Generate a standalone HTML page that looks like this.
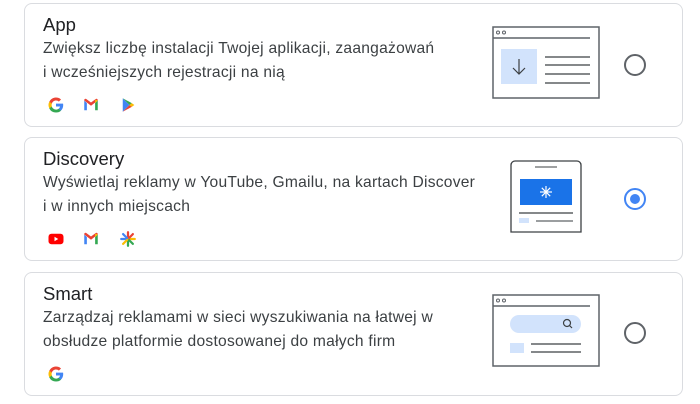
<!DOCTYPE html><html><head><meta charset="utf-8"><style>
body{margin:0;width:700px;height:404px;background:#fff;font-family:"Liberation Sans",Arial,sans-serif;position:relative;overflow:hidden}
.card{position:absolute;left:24px;width:659px;height:124px;border:1px solid #dadce0;border-radius:8px;box-sizing:border-box}
.t{position:absolute;left:18px;top:10px;font-size:18.5px;color:#202124}
.d{position:absolute;left:18px;top:33px;font-size:15.6px;letter-spacing:0.25px;line-height:24px;color:#3c4043;white-space:nowrap}
.ic{position:absolute;top:92px}
.r{position:absolute;left:599px;width:18px;height:18px;border:2px solid #5f6368;border-radius:50%}
.r.on{border-color:#4285f4}
.r.on::after{content:"";position:absolute;left:4px;top:4px;width:10px;height:10px;border-radius:50%;background:#4285f4}
svg{position:absolute}
</style></head><body>
<div class="card" style="top:3px">
<div class="t">App</div>
<div class="d">Zwiększ liczbę instalacji Twojej aplikacji, zaangażowań<br>i wcześniejszych rejestracji na nią</div>
<svg class="ic" style="left:22px" width="18" height="18" viewBox="0 0 24 24"><path d="M21.6 12.2c0-.7-.1-1.4-.2-2H12v3.8h5.4a4.6 4.6 0 0 1-2 3v2.5h3.2c1.9-1.7 3-4.3 3-7.3z" fill="#4285f4"/><path d="M12 22c2.7 0 5-.9 6.6-2.4l-3.2-2.5c-.9.6-2 1-3.4 1-2.6 0-4.8-1.8-5.6-4.1H3.1v2.6A10 10 0 0 0 12 22z" fill="#34a853"/><path d="M6.4 14a6 6 0 0 1 0-3.9V7.5H3.1a10 10 0 0 0 0 9z" fill="#fbbc04"/><path d="M12 6c1.5 0 2.8.5 3.8 1.5l2.9-2.9A10 10 0 0 0 3.1 7.5l3.3 2.6C7.2 7.8 9.4 6 12 6z" fill="#ea4335"/></svg>
<svg class="ic" style="left:57px" width="18" height="18" viewBox="0 0 24 24"><path d="M3 6v13h3.5V9.5z" fill="#4285f4"/><path d="M17.5 9.5V19H21V6z" fill="#34a853"/><path d="M3 6l9 7 9-7v-.5c0-1.5-1.7-2.3-2.9-1.4L12 8.7 5.9 4.1C4.7 3.2 3 4 3 5.5z" fill="#ea4335"/><path d="M17.5 4.8L21 6v.1l-3.5 3.4z" fill="#fbbc04"/></svg>
<svg class="ic" style="left:94px" width="18" height="18" viewBox="0 0 24 24"><path d="M5 3l9 9-9 9z" fill="#4285f4"/><path d="M5 3l12 6.5-3 2.5z" fill="#34a853"/><path d="M5 21l12-6.5-3-2.5z" fill="#ea4335"/><path d="M17 9.5l3.5 2.5-3.5 2.5-3-2.5z" fill="#fbbc04"/></svg>
<svg style="left:467px;top:22px" width="108" height="73"><rect x="1" y="1" width="106" height="71" fill="#fff" stroke="#5f6368" stroke-width="1.5"/><line x1="1" y1="12" x2="98" y2="12" stroke="#5f6368" stroke-width="1.5"/><circle cx="6" cy="6.5" r="1.5" fill="none" stroke="#5f6368"/><circle cx="12" cy="6.5" r="1.5" fill="none" stroke="#5f6368"/><rect x="9" y="23" width="36" height="35" fill="#d2e3fc"/><path d="M27 33v15M21 42l6 6 6-6" fill="none" stroke="#3c4043" stroke-width="1.2"/><g stroke="#3c4043" stroke-width="1.2"><line x1="53" y1="31" x2="98" y2="31"/><line x1="53" y1="39" x2="98" y2="39"/><line x1="53" y1="48" x2="98" y2="48"/><line x1="53" y1="57" x2="98" y2="57"/></g></svg>
<div class="r" style="top:50px"></div>
</div>
<div class="card" style="top:137px">
<div class="t">Discovery</div>
<div class="d">Wyświetlaj reklamy w YouTube, Gmailu, na kartach Discover<br>i w innych miejscach</div>
<svg class="ic" style="left:22px" width="18" height="18" viewBox="0 0 24 24"><rect x="2" y="5" width="20" height="14" rx="4" fill="#ff0000"/><path d="M10 9v6l5-3z" fill="#fff"/></svg>
<svg class="ic" style="left:57px" width="18" height="18" viewBox="0 0 24 24"><path d="M3 6v13h3.5V9.5z" fill="#4285f4"/><path d="M17.5 9.5V19H21V6z" fill="#34a853"/><path d="M3 6l9 7 9-7v-.5c0-1.5-1.7-2.3-2.9-1.4L12 8.7 5.9 4.1C4.7 3.2 3 4 3 5.5z" fill="#ea4335"/><path d="M17.5 4.8L21 6v.1l-3.5 3.4z" fill="#fbbc04"/></svg>
<svg class="ic" style="left:94px" width="18" height="18" viewBox="0 0 24 24" stroke-width="3" stroke-linecap="round"><line x1="12" y1="3" x2="12" y2="11" stroke="#ea4335"/><line x1="12" y1="13" x2="12" y2="21" stroke="#34a853"/><line x1="3" y1="12" x2="11" y2="12" stroke="#4285f4"/><line x1="13" y1="12" x2="21" y2="12" stroke="#fbbc04"/><line x1="5.5" y1="5.5" x2="10.5" y2="10.5" stroke="#4285f4"/><line x1="18.5" y1="18.5" x2="13.5" y2="13.5" stroke="#34a853"/><line x1="18.5" y1="5.5" x2="13.5" y2="10.5" stroke="#ea4335"/><line x1="5.5" y1="18.5" x2="10.5" y2="13.5" stroke="#fbbc04"/></svg>
<svg style="left:485px;top:22px" width="72" height="73"><path d="M1 72V5a4 4 0 0 1 4-4h62a4 4 0 0 1 4 4v67z" fill="#fff" stroke="#3c4043" stroke-width="1.3"/><line x1="25" y1="7" x2="47" y2="7" stroke="#3c4043"/><rect x="10" y="19" width="52" height="26" fill="#1a73e8"/><g stroke="#fff" stroke-width="1.2"><line x1="36" y1="26" x2="36" y2="38"/><line x1="30" y1="32" x2="42" y2="32"/><line x1="31.8" y1="27.8" x2="40.2" y2="36.2"/><line x1="40.2" y1="27.8" x2="31.8" y2="36.2"/></g><line x1="9" y1="53" x2="63" y2="53" stroke="#3c4043" stroke-width="1.2"/><rect x="9" y="58" width="10" height="5" fill="#d2e3fc"/><line x1="26" y1="61" x2="63" y2="61" stroke="#5f6368" stroke-width="1.2"/></svg>
<div class="r on" style="top:50px"></div>
</div>
<div class="card" style="top:272px">
<div class="t">Smart</div>
<div class="d">Zarządzaj reklamami w sieci wyszukiwania na łatwej w<br>obsłudze platformie dostosowanej do małych firm</div>
<svg class="ic" style="left:22px" width="18" height="18" viewBox="0 0 24 24"><path d="M21.6 12.2c0-.7-.1-1.4-.2-2H12v3.8h5.4a4.6 4.6 0 0 1-2 3v2.5h3.2c1.9-1.7 3-4.3 3-7.3z" fill="#4285f4"/><path d="M12 22c2.7 0 5-.9 6.6-2.4l-3.2-2.5c-.9.6-2 1-3.4 1-2.6 0-4.8-1.8-5.6-4.1H3.1v2.6A10 10 0 0 0 12 22z" fill="#34a853"/><path d="M6.4 14a6 6 0 0 1 0-3.9V7.5H3.1a10 10 0 0 0 0 9z" fill="#fbbc04"/><path d="M12 6c1.5 0 2.8.5 3.8 1.5l2.9-2.9A10 10 0 0 0 3.1 7.5l3.3 2.6C7.2 7.8 9.4 6 12 6z" fill="#ea4335"/></svg>
<svg style="left:467px;top:21px" width="108" height="73"><rect x="1" y="1" width="106" height="71" fill="#fff" stroke="#5f6368" stroke-width="1.5"/><line x1="1" y1="12" x2="98" y2="12" stroke="#5f6368" stroke-width="1.5"/><circle cx="6" cy="6.5" r="1.5" fill="none" stroke="#5f6368"/><circle cx="12" cy="6.5" r="1.5" fill="none" stroke="#5f6368"/><rect x="18" y="21" width="71" height="18" rx="9" fill="#d2e3fc"/><circle cx="75" cy="29" r="3.5" fill="none" stroke="#3c4043" stroke-width="1.2"/><line x1="77.5" y1="31.5" x2="80" y2="34" stroke="#3c4043" stroke-width="1.2"/><rect x="18" y="49" width="14" height="10" fill="#d2e3fc"/><line x1="39" y1="50" x2="89" y2="50" stroke="#3c4043" stroke-width="1.2"/><line x1="39" y1="58" x2="89" y2="58" stroke="#3c4043" stroke-width="1.2"/></svg>
<div class="r" style="top:49px"></div>
</div>
</body></html>
